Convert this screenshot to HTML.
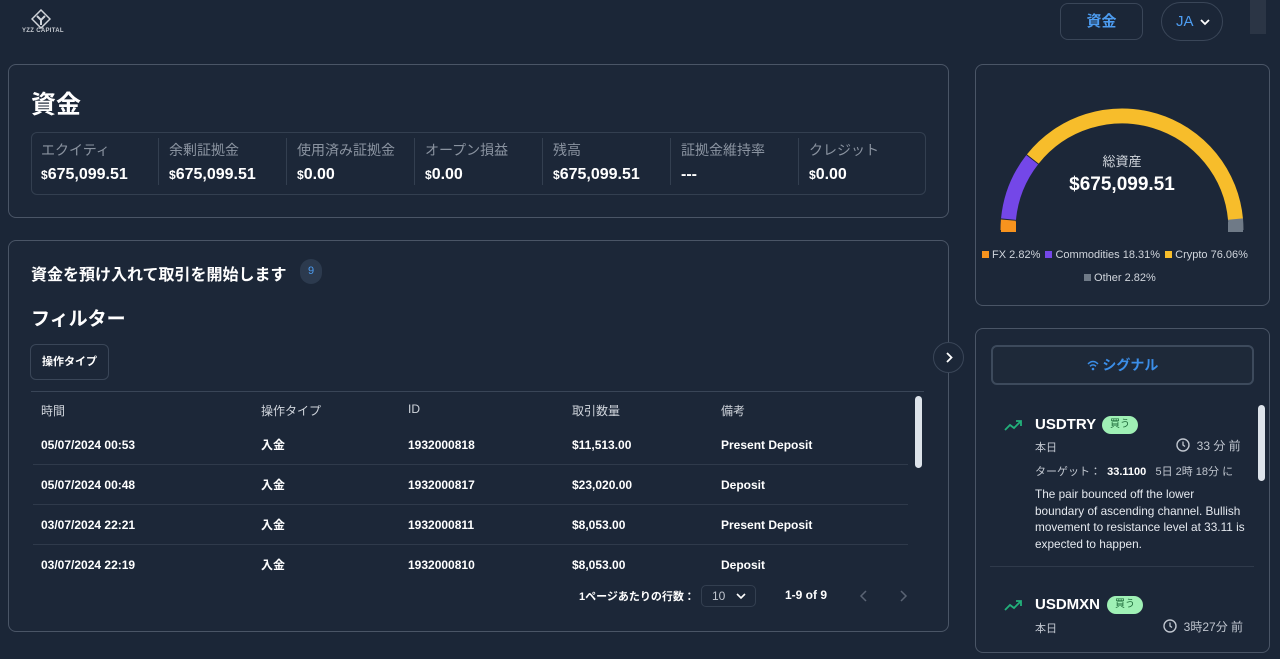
<!DOCTYPE html>
<html><head><meta charset="utf-8">
<style>
*{box-sizing:border-box;margin:0;padding:0}
body{width:1280px;height:659px;background:#1b2637;font-family:"Liberation Sans","Noto Sans CJK JP",sans-serif;color:#fff;position:relative;overflow:hidden}
.abs{position:absolute}
.card{position:absolute;border:1px solid #4a5566;border-radius:8px;background:#1c2738}
.lbl{color:#8a93a0;font-size:14px}
.val{font-size:16px;font-weight:bold}
.val small{font-size:12px}
.th{font-size:12px;color:#d0d5dc;position:absolute}
.td{font-size:12px;font-weight:bold;position:absolute}
.sep{position:absolute;height:1px;background:#2f3a4b}
</style></head><body>
<svg class="abs" style="left:31px;top:9px" width="20" height="20" viewBox="0 0 20 20"><path d="M10 1L19 10L10 19L1 10Z" fill="none" stroke="#d0d4da" stroke-width="1.5"/><path d="M6 7L10 11L14 7M10 11V16" fill="none" stroke="#d0d4da" stroke-width="2"/></svg>
<div class="abs" style="left:22px;top:28px;font-size:6px;font-weight:bold;color:#c8ccd2;letter-spacing:.3px">YZZ CAPITAL</div>
<div class="abs" style="left:1060px;top:3px;width:83px;height:37px;border:1px solid #3a4658;border-radius:8px;color:#4d9cf0;font-size:15px;font-weight:bold;text-align:center;line-height:35px">資金</div>
<div class="abs" style="left:1161px;top:2px;width:62px;height:39px;border:1px solid #3a4658;border-radius:20px;color:#4d9cf0;font-size:15px;line-height:37px;padding-left:14px">JA <svg width="12" height="8" style="margin-left:2px" viewBox="0 0 12 8"><path d="M2 2L6 6L10 2" stroke="#fff" stroke-width="1.8" fill="none"/></svg></div>
<div class="abs" style="left:1250px;top:0;width:16px;height:34px;background:#4a5260;opacity:.35"></div>

<div class="card" style="left:8px;top:64px;width:941px;height:154px">
<div class="abs" style="left:22px;top:20px;font-size:25px;font-weight:bold">資金</div>
<div class="abs" style="left:22px;top:67px;width:895px;height:63px;border:1px solid #333f50;border-radius:6px"></div>
</div>
<div class="abs" style="left:31px;top:130px;width:895px;height:63px;display:flex">
<div style="width:128px;border-right:1px solid #333f50;margin:8px 0;padding:2px 0 0 10px"><div class="lbl">エクイティ</div><div class="val" style="margin-top:6px"><small>$</small>675,099.51</div></div>
<div style="width:128px;border-right:1px solid #333f50;margin:8px 0;padding:2px 0 0 10px"><div class="lbl">余剰証拠金</div><div class="val" style="margin-top:6px"><small>$</small>675,099.51</div></div>
<div style="width:128px;border-right:1px solid #333f50;margin:8px 0;padding:2px 0 0 10px"><div class="lbl">使用済み証拠金</div><div class="val" style="margin-top:6px"><small>$</small>0.00</div></div>
<div style="width:128px;border-right:1px solid #333f50;margin:8px 0;padding:2px 0 0 10px"><div class="lbl">オープン損益</div><div class="val" style="margin-top:6px"><small>$</small>0.00</div></div>
<div style="width:128px;border-right:1px solid #333f50;margin:8px 0;padding:2px 0 0 10px"><div class="lbl">残高</div><div class="val" style="margin-top:6px"><small>$</small>675,099.51</div></div>
<div style="width:128px;border-right:1px solid #333f50;margin:8px 0;padding:2px 0 0 10px"><div class="lbl">証拠金維持率</div><div class="val" style="margin-top:6px">---</div></div>
<div style="width:127px;margin:8px 0;padding:2px 0 0 10px"><div class="lbl">クレジット</div><div class="val" style="margin-top:6px"><small>$</small>0.00</div></div>
</div>

<div class="card" style="left:8px;top:240px;width:941px;height:392px"></div>
<div class="abs" style="left:31px;top:261px;font-size:16px;font-weight:bold;white-space:nowrap">資金を預け入れて取引を開始します</div>
<div class="abs" style="left:300px;top:259px;width:22px;height:25px;border-radius:11px;background:#2c3a4e;color:#4d9cf0;font-size:11px;text-align:center;line-height:25px">9</div>
<div class="abs" style="left:31px;top:304px;font-size:19px;font-weight:bold">フィルター</div>
<div class="abs" style="left:30px;top:344px;width:79px;height:36px;border:1px solid #3a4658;border-radius:6px;font-size:11px;font-weight:bold;line-height:34px;text-align:center">操作タイプ</div>
<div class="sep" style="left:31px;top:391px;width:893px;background:#394557"></div>
<div class="th" style="left:41px;top:402px">時間</div>
<div class="th" style="left:261px;top:402px">操作タイプ</div>
<div class="th" style="left:408px;top:402px">ID</div>
<div class="th" style="left:572px;top:402px">取引数量</div>
<div class="th" style="left:721px;top:402px">備考</div>
<div class="abs" style="left:915px;top:396px;width:7px;height:72px;border-radius:4px;background:#dde3ea"></div>

<div class="td" style="left:41px;top:438px">05/07/2024 00:53</div><div class="td" style="left:261px;top:436px">入金</div><div class="td" style="left:408px;top:438px">1932000818</div><div class="td" style="left:572px;top:438px">$11,513.00</div><div class="td" style="left:721px;top:438px">Present Deposit</div>
<div class="sep" style="left:33px;top:464px;width:875px"></div>
<div class="td" style="left:41px;top:478px">05/07/2024 00:48</div><div class="td" style="left:261px;top:476px">入金</div><div class="td" style="left:408px;top:478px">1932000817</div><div class="td" style="left:572px;top:478px">$23,020.00</div><div class="td" style="left:721px;top:478px">Deposit</div>
<div class="sep" style="left:33px;top:504px;width:875px"></div>
<div class="td" style="left:41px;top:518px">03/07/2024 22:21</div><div class="td" style="left:261px;top:516px">入金</div><div class="td" style="left:408px;top:518px">1932000811</div><div class="td" style="left:572px;top:518px">$8,053.00</div><div class="td" style="left:721px;top:518px">Present Deposit</div>
<div class="sep" style="left:33px;top:544px;width:875px"></div>
<div class="td" style="left:41px;top:558px">03/07/2024 22:19</div><div class="td" style="left:261px;top:556px">入金</div><div class="td" style="left:408px;top:558px">1932000810</div><div class="td" style="left:572px;top:558px">$8,053.00</div><div class="td" style="left:721px;top:558px">Deposit</div>

<div class="td" style="left:579px;top:588px;font-size:11px">1ページあたりの行数：</div>
<div class="abs" style="left:701px;top:585px;width:55px;height:22px;border:1px solid #333f50;border-radius:5px;font-size:12px;color:#c0c6cf;line-height:20px;padding-left:10px">10 <svg width="12" height="8" style="margin-left:6px" viewBox="0 0 12 8"><path d="M2 2L6 6L10 2" stroke="#fff" stroke-width="1.6" fill="none"/></svg></div>
<div class="td" style="left:785px;top:588px">1-9 of 9</div>
<svg class="abs" style="left:858px;top:589px" width="60" height="14" viewBox="0 0 60 14"><path d="M8 2L3 7L8 12" stroke="#5a6474" stroke-width="1.5" fill="none"/><path d="M43 2L48 7L43 12" stroke="#5a6474" stroke-width="1.5" fill="none"/></svg>

<div class="abs" style="left:933px;top:342px;width:31px;height:31px;border-radius:50%;background:#1c2738;border:1px solid #3a4658"></div>
<svg class="abs" style="left:943px;top:351px" width="12" height="13" viewBox="0 0 12 13"><path d="M4 2L8.5 6.5L4 11" stroke="#fff" stroke-width="1.8" fill="none"/></svg>

<div class="card" style="left:975px;top:64px;width:295px;height:242px"></div>
<svg class="abs" style="left:0;top:0" width="1280" height="320">
<g fill="none" stroke-width="15">
<path d="M1008 230 A114 114 0 0 1 1008.4 220.1" stroke="#f7931e"/>
<path d="M1008.5 219.1 A114 114 0 0 1 1032.2 159.8" stroke="#7447e8"/>
<path d="M1032.8 159 A114 114 0 0 1 1235.6 220.1" stroke="#f7bd2b"/>
<path d="M1235.5 219.1 A114 114 0 0 1 1236 230" stroke="#6f7a87"/>
</g>
<rect x="1001" y="222" width="15" height="10" fill="#f7931e"/>
<rect x="1228" y="222" width="15" height="10" fill="#6f7a87"/>
</svg>
<div class="abs" style="left:1072px;top:151px;width:100px;text-align:center;font-size:13px;color:#d0d5dc">総資産</div>
<div class="abs" style="left:1022px;top:174px;width:200px;text-align:center;font-size:19px;font-weight:bold">$675,099.51</div>
<div class="abs" style="left:982px;top:249px;font-size:11px;color:#d0d5dc;white-space:nowrap"><span style="display:inline-block;width:7px;height:7px;background:#f7931e"></span> FX 2.82% <span style="display:inline-block;width:7px;height:7px;background:#7447e8;margin-left:2px"></span> Commodities 18.31% <span style="display:inline-block;width:7px;height:7px;background:#f7bd2b;margin-left:2px"></span> Crypto 76.06%</div>
<div class="abs" style="left:1084px;top:272px;font-size:11px;color:#d0d5dc"><span style="display:inline-block;width:7px;height:7px;background:#6f7a87"></span> Other 2.82%</div>

<div class="card" style="left:975px;top:328px;width:295px;height:325px"></div>
<div class="abs" style="left:991px;top:345px;width:263px;height:40px;border:2px solid #3d4a5c;border-radius:6px;background:#1e2939;color:#3b8ee8;font-size:14px;font-weight:bold;text-align:center;line-height:36px">
<svg width="12" height="11" viewBox="0 0 12 11" style="vertical-align:-1px"><path d="M1 4Q6 -1 11 4M3 6.3Q6 3.5 9 6.3" stroke="#3b8ee8" stroke-width="1.5" fill="none"/><circle cx="6" cy="9" r="1.3" fill="#3b8ee8"/></svg> シグナル</div>
<div class="abs" style="left:1258px;top:405px;width:7px;height:76px;border-radius:4px;background:#dde3ea"></div>

<svg class="abs" style="left:1004px;top:419px" width="20" height="14" viewBox="0 0 20 14"><path d="M1 11L6 6L10 9L17 2M12 2H17V7" stroke="#22b07a" stroke-width="1.8" fill="none"/></svg>
<div class="abs" style="left:1035px;top:416px;font-size:15px;font-weight:bold">USDTRY</div>
<div class="abs" style="left:1102px;top:416px;width:36px;height:18px;border-radius:9px;background:#9ff0b5;color:#1e6b3a;font-size:10px;text-align:center;line-height:18px">買う</div>
<div class="abs" style="left:1035px;top:439px;font-size:11px;color:#c0c6cf">本日</div>
<div class="abs" style="left:1176px;top:437px;font-size:12px;color:#c0c6cf"><svg width="14" height="14" viewBox="0 0 14 14" style="vertical-align:-2px"><circle cx="7" cy="7" r="6" stroke="#c0c6cf" stroke-width="1.4" fill="none"/><path d="M7 3.5V7L9 8.5" stroke="#c0c6cf" stroke-width="1.3" fill="none"/></svg>&nbsp; 33 分 前</div>
<div class="abs" style="left:1035px;top:463px;font-size:11px;color:#c0c6cf;white-space:nowrap">ターゲット：&nbsp;&nbsp;<b style="color:#fff">33.1100</b>&nbsp;&nbsp;&nbsp;5日 2時 18分 に</div>
<div class="abs" style="left:1035px;top:486px;width:212px;font-size:11.8px;line-height:16.5px;color:#e4e8ee">The pair bounced off the lower<br>boundary of ascending channel. Bullish<br>movement to resistance level at 33.11 is<br>expected to happen.</div>
<div class="sep" style="left:990px;top:566px;width:264px"></div>
<svg class="abs" style="left:1004px;top:599px" width="20" height="14" viewBox="0 0 20 14"><path d="M1 11L6 6L10 9L17 2M12 2H17V7" stroke="#22b07a" stroke-width="1.8" fill="none"/></svg>
<div class="abs" style="left:1035px;top:596px;font-size:15px;font-weight:bold">USDMXN</div>
<div class="abs" style="left:1107px;top:596px;width:36px;height:18px;border-radius:9px;background:#9ff0b5;color:#1e6b3a;font-size:10px;text-align:center;line-height:18px">買う</div>
<div class="abs" style="left:1035px;top:620px;font-size:11px;color:#c0c6cf">本日</div>
<div class="abs" style="left:1163px;top:618px;font-size:12px;color:#c0c6cf"><svg width="14" height="14" viewBox="0 0 14 14" style="vertical-align:-2px"><circle cx="7" cy="7" r="6" stroke="#c0c6cf" stroke-width="1.4" fill="none"/><path d="M7 3.5V7L9 8.5" stroke="#c0c6cf" stroke-width="1.3" fill="none"/></svg>&nbsp; 3時27分 前</div>
</body></html>
